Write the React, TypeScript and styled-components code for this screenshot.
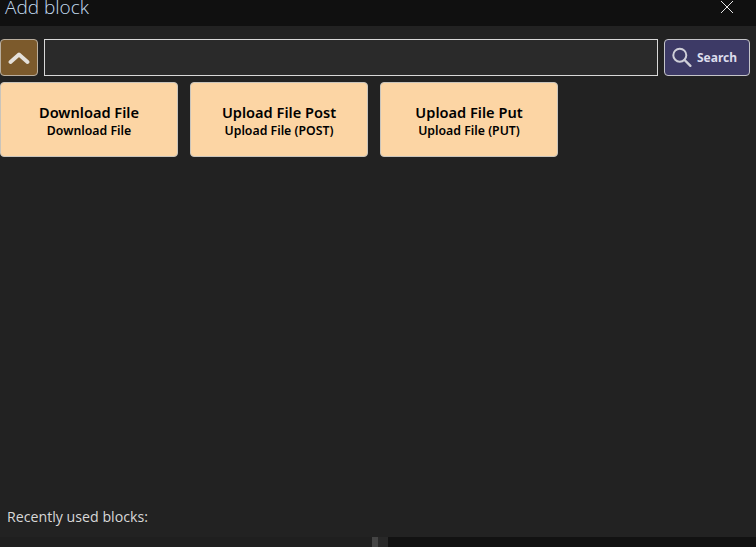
import React from "react";
import styled, { createGlobalStyle } from "styled-components";

const Global = createGlobalStyle`
  html, body { margin: 0; padding: 0; background: #222222; overflow: hidden; }
  #root { height: 547px; }
  * { box-sizing: border-box; }
`;

const Page = styled.div`
  width: 756px;
  height: 547px;
  display: flex;
  flex-direction: column;
  background: #222222;
  font-family: "Noto Sans", "Open Sans", sans-serif;
`;

const TitleBar = styled.header`
  height: 26px;
  flex: none;
  display: flex;
  align-items: flex-end;
  justify-content: space-between;
  background: #101010;
  overflow: hidden;
`;

const Title = styled.h1`
  margin: 0 0 0 5px;
  font-family: "Open Sans", sans-serif;
  font-size: 19px;
  font-weight: 300;
  line-height: 24px;
  color: #c4dcf0;
  transform: translateY(-7px);
`;

const CloseButton = styled.button`
  width: 14px;
  height: 14px;
  margin: 0 22px 12px 0;
  padding: 0;
  border: 0;
  background: none;
  display: block;
`;

const Toolbar = styled.div`
  display: flex;
  gap: 6px;
  margin-top: 13px;
  height: 37px;
  padding-right: 6px;
`;

const ToggleButton = styled.button`
  width: 38px;
  height: 37px;
  flex: none;
  padding: 0;
  background: #7c5a2c;
  border: 1px solid #b9ae9f;
  border-radius: 4px;
  display: flex;
  align-items: center;
  justify-content: center;
`;

const SearchInput = styled.input`
  flex: 1;
  min-width: 0;
  height: 37px;
  background: #2a2a2a;
  border: 1px solid #d8d8d8;
  outline: none;
  color: #fff;
`;

const SearchButton = styled.button`
  width: 86px;
  height: 37px;
  flex: none;
  padding: 0 0 0 7px;
  background: #3d3a66;
  border: 1px solid #c4c4c8;
  border-radius: 4px;
  display: flex;
  align-items: center;
  gap: 4px;
  font-family: "Noto Sans", sans-serif;
  font-size: 12px;
  font-weight: 700;
  color: #dcdcec;
`;

const Blocks = styled.div`
  display: flex;
  gap: 12px;
  margin-top: 6px;
  flex: 1;
  align-items: flex-start;
`;

const BlockCard = styled.button`
  width: 178px;
  height: 75px;
  padding: 2px 0 0;
  background: #fcd5a4;
  border: 1px solid #c9c4bb;
  border-radius: 4px;
  display: flex;
  flex-direction: column;
  align-items: center;
  justify-content: center;
  color: #000;
  font-family: "Noto Sans", sans-serif;
  font-weight: 600;
`;

const BlockName = styled.span`
  font-size: 14.6px;
  line-height: 19px;
`;

const BlockDescription = styled.span`
  font-size: 12.3px;
  line-height: 17px;
`;

const RecentLabel = styled.div`
  flex: none;
  height: 30px;
  padding-left: 7px;
  font-size: 14.2px;
  line-height: 20px;
  color: #d8d8d8;
  font-family: "Open Sans", sans-serif;
`;

const BottomStrip = styled.div`
  flex: none;
  height: 10px;
  display: flex;
`;

const RecentTrack = styled.div`
  width: 372px;
  background: #1f1f1f;
`;

const ScrollThumb = styled.div`
  width: 6px;
  background: #444444;
`;

const ScrollGutter = styled.div`
  width: 10px;
  background: #282828;
`;

const PreviewArea = styled.div`
  flex: 1;
  background: #121212;
`;

const blocks = [
  { name: "Download File", description: "Download File" },
  { name: "Upload File Post", description: "Upload File (POST)" },
  { name: "Upload File Put", description: "Upload File (PUT)" },
];

export default function App() {
  return (
    <Page>
      <Global />
      <TitleBar>
        <Title>Add block</Title>
        <CloseButton aria-label="Close">
          <svg width="14" height="14" viewBox="0 0 14 14">
            <path d="M1 1 L13 13 M13 1 L1 13" stroke="#e6e6e6" strokeWidth="1" fill="none" />
          </svg>
        </CloseButton>
      </TitleBar>
      <Toolbar>
        <ToggleButton aria-label="Collapse">
          <svg width="22" height="14" viewBox="0 0 22 14">
            <path d="M2.5 11 L11 3.5 L19.5 11" stroke="#e4e0da" strokeWidth="3.8" fill="none" strokeLinecap="round" strokeLinejoin="round" />
          </svg>
        </ToggleButton>
        <SearchInput />
        <SearchButton>
          <svg width="21" height="23" viewBox="0 0 21 23">
            <circle cx="7.8" cy="9.2" r="6.5" stroke="#cfcfd8" strokeWidth="2" fill="none" />
            <path d="M12.6 14 L18.4 19.8" stroke="#cfcfd8" strokeWidth="2.4" fill="none" strokeLinecap="round" />
          </svg>
          Search
        </SearchButton>
      </Toolbar>
      <Blocks>
        {blocks.map((b) => (
          <BlockCard key={b.name}>
            <BlockName>{b.name}</BlockName>
            <BlockDescription>{b.description}</BlockDescription>
          </BlockCard>
        ))}
      </Blocks>
      <RecentLabel>Recently used blocks:</RecentLabel>
      <BottomStrip>
        <RecentTrack />
        <ScrollThumb />
        <ScrollGutter />
        <PreviewArea />
      </BottomStrip>
    </Page>
  );
}
